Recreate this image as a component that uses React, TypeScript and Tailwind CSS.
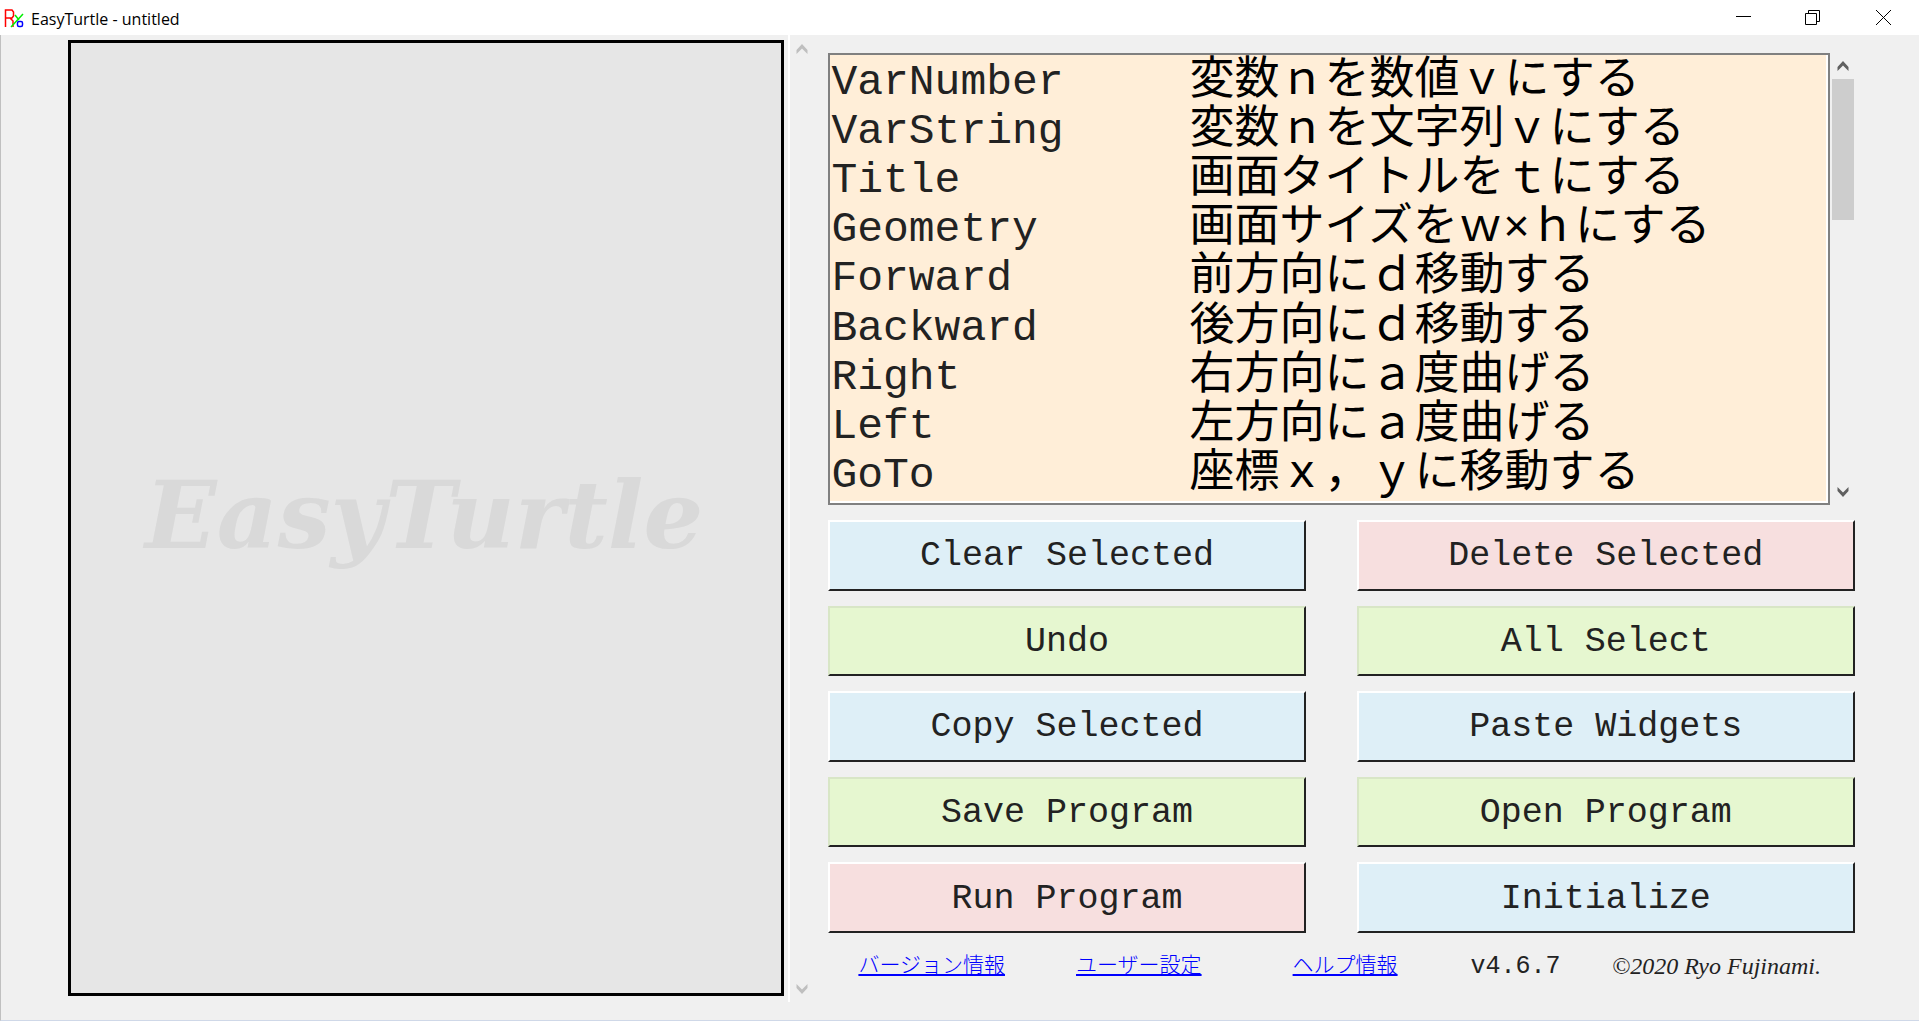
const commands = [
  { name: "VarNumber", note: "変数ｎを数値ｖにする" },
  { name: "VarString", note: "変数ｎを文字列ｖにする" },
  { name: "Title", note: "画面タイトルをｔにする" },
  { name: "Geometry", note: "画面サイズをｗ×ｈにする" },
  { name: "Forward", note: "前方向にｄ移動する" },
  { name: "Backward", note: "後方向にｄ移動する" },
  { name: "Right", note: "右方向にａ度曲げる" },
  { name: "Left", note: "左方向にａ度曲げる" },
  { name: "GoTo", note: "座標ｘ，ｙに移動する" },
];

const blue = "bg-[#deeff7] border-t-white border-l-white";
const green = "bg-[#e6f7d0] border-t-[#d8e6c6] border-l-[#d8e6c6]";
const red = "bg-[#f7dfdf] border-t-white border-l-white";

const actions = [
  { label: "Clear Selected", tone: blue },
  { label: "Delete Selected", tone: red },
  { label: "Undo", tone: green },
  { label: "All Select", tone: green },
  { label: "Copy Selected", tone: blue },
  { label: "Paste Widgets", tone: blue },
  { label: "Save Program", tone: green },
  { label: "Open Program", tone: green },
  { label: "Run Program", tone: red },
  { label: "Initialize", tone: blue },
];

function AppIcon() {
  return (
    <svg width="20" height="20" viewBox="0 0 20 20" fill="none" aria-hidden="true">
      <path d="M1.5 19V2H8L9.5 4V8L8 10H2M6 10L9 13V19" stroke="#f00" strokeWidth="1.5" />
      <path d="M11 7L15 12M19 6L7 19" stroke="#0e0" strokeWidth="1.5" />
      <rect x="13.5" y="13.5" width="5" height="5" rx="1.5" fill="#fff" stroke="#00f" strokeWidth="1.5" />
    </svg>
  );
}

function Arrow({ down, faded }: { down?: boolean; faded?: boolean }) {
  return (
    <svg
      width="12"
      height="10"
      viewBox="0 0 12 10"
      fill={faded ? "#bfbfbf" : "#606060"}
      className={down ? "rotate-180" : ""}
      aria-hidden="true"
    >
      <path d="M6 0L11.5 6V10L6 4.5L0.5 10V6Z" />
    </svg>
  );
}

function TitleBar() {
  return (
    <header className="flex h-[35px] shrink-0 items-center bg-white pl-1">
      <AppIcon />
      <h1 className="mt-0.5 ml-[7px] font-['Open_Sans',sans-serif] text-base leading-6 text-black">
        EasyTurtle - untitled
      </h1>
      <div className="ml-auto flex h-full">
        <button aria-label="Minimize" className="flex w-[69px] items-center justify-center">
          <svg width="15" height="15" viewBox="0 0 15 15" stroke="#000" aria-hidden="true">
            <path d="M0 6.5H15" />
          </svg>
        </button>
        <button aria-label="Restore" className="flex w-[69px] items-center justify-center">
          <svg width="15" height="15" viewBox="0 0 15 15" stroke="#000" fill="none" aria-hidden="true">
            <path d="M0.5 3.5H11.5V14.5H0.5ZM3.5 3V0.5H14.5V11.5H12" />
          </svg>
        </button>
        <button aria-label="Close" className="flex w-[72px] items-center justify-center">
          <svg width="15" height="15" viewBox="0 0 15 15" stroke="#000" aria-hidden="true">
            <path d="M0 0L15 15M15 0L0 15" />
          </svg>
        </button>
      </div>
    </header>
  );
}

function CommandList() {
  return (
    <div className="flex grow-[452] basis-0">
      <div className="flex grow border-2 border-[#808080]">
        <ul
          role="listbox"
          aria-label="Commands"
          className="grid grow auto-rows-fr border-r-2 border-b-2 border-r-white border-b-white bg-[#ffeed8] pt-[3px] pl-px font-['Liberation_Mono','Noto_Sans_CJK_JP',monospace] whitespace-nowrap text-[#222]"
        >
          {commands.map((c) => (
            <li key={c.name} role="option" aria-selected="false" className="flex items-center">
              <span className="w-[358px] text-[43px] leading-12">{c.name}</span>
              <span lang="ja" className="text-[45px] leading-12 text-black">
                {c.note}
              </span>
            </li>
          ))}
        </ul>
      </div>
      <div className="flex w-[25px] shrink-0 flex-col items-center pt-2 pb-2">
        <Arrow />
        <div className="mt-2 h-[141px] w-[22px] bg-[#cdcdcd]" />
        <div className="mt-auto">
          <Arrow down />
        </div>
      </div>
    </div>
  );
}

export default function App() {
  return (
    <div className="flex min-h-screen flex-col bg-[#f0f0f0]">
      <TitleBar />
      <main className="flex grow border-b border-l border-b-[#cfd8e8] border-l-[#c0c0c0] pr-16 pl-[67px]">
        <section className="flex grow-[716] basis-0 pt-[5px] pb-6">
          <div className="flex grow items-center justify-center border-3 border-black bg-[#e6e6e6] pr-1 pb-1.5">
            <p className="font-['DejaVu_Serif',serif] text-[94px] leading-none font-bold text-[#d9d9d9] italic">
              EasyTurtle
            </p>
          </div>
        </section>
        <div className="mb-[18px] ml-1 flex w-10 shrink-0 flex-col items-start justify-between border-l-2 border-white pt-[9px] pb-2 pl-1.5">
          <Arrow faded />
          <Arrow down faded />
        </div>
        <section className="flex grow-[1026] basis-0 flex-col pt-[18px]">
          <CommandList />
          <div className="mt-[15px] grid grow-[413] basis-0 auto-rows-fr grid-cols-[477fr_498fr] gap-x-[51px] gap-y-[15px]">
            {actions.map((a) => (
              <button
                key={a.label}
                className={`border-2 border-r-[#222] border-b-[#222] pt-0.5 font-['Liberation_Mono',monospace] text-[35px] leading-10 whitespace-nowrap text-[#222] ${a.tone}`}
              >
                {a.label}
              </button>
            ))}
          </div>
          <footer className="flex h-[87px] shrink-0 items-center pr-[34px] pb-7 pl-[30px] font-['Noto_Sans_CJK_JP',sans-serif] text-[21px] leading-8 font-light whitespace-nowrap text-[#222]">
            <a href="#version" lang="ja" className="text-[#00f] underline">
              バージョン情報
            </a>
            <a href="#settings" lang="ja" className="ml-[71px] text-[#00f] underline">
              ユーザー設定
            </a>
            <a href="#help" lang="ja" className="ml-[91px] text-[#00f] underline">
              ヘルプ情報
            </a>
            <span className="ml-[73px] pt-2 font-['Liberation_Mono',monospace] text-[25px] font-normal">v4.6.7</span>
            <span className="ml-auto pt-1.5 font-['Liberation_Serif',serif] text-[24px] font-normal italic">
              ©2020 Ryo Fujinami.
            </span>
          </footer>
        </section>
      </main>
    </div>
  );
}
